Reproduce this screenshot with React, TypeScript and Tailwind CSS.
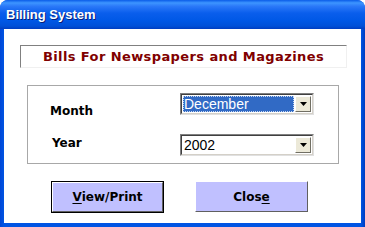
import React from "react";

function Arrow() {
  return (
    <svg width="7" height="4" viewBox="0 0 7 4">
      <path d="M0 0H7L3.5 4Z" fill="#000" />
    </svg>
  );
}

function Combo({ value, selected }: { value: string; selected?: boolean }) {
  return (
    <div className="flex h-[22px] w-[134px] border border-t-[#808080] border-l-[#808080] border-r-[#e0e0e0] border-b-[#e0e0e0] bg-white">
      <div className="flex flex-1 items-stretch border border-t-[#404040] border-l-[#404040] border-r-[#d4d0c8] border-b-[#d4d0c8] p-[1px]">
        <div
          className={
            selected
              ? "flex flex-1 items-center bg-[#316ac5] pl-[1px] text-white outline outline-1 outline-dotted outline-[#c8d8f0] -outline-offset-1"
              : "flex flex-1 items-center pl-[1px] text-black"
          }
          style={{ fontFamily: '"Liberation Sans", Arial, sans-serif', fontSize: "14px" }}
        >
          {value}
        </div>
        <div className="ml-[1px] flex w-[16px] items-center justify-center border border-t-white border-l-white border-r-[#716f64] border-b-[#716f64] bg-[#ece9d8]">
          <Arrow />
        </div>
      </div>
    </div>
  );
}

const comic = { fontFamily: '"DejaVu Sans", sans-serif' };

export default function App() {
  return (
    <div className="flex h-[227px] w-[365px] flex-col overflow-hidden rounded-t-[8px] bg-[#0054e3]">
      <div
        className="flex h-[29px] shrink-0 items-center pl-[6px] text-[13px] font-bold text-white"
        style={{
          fontFamily: '"Liberation Sans", Tahoma, sans-serif',
          textShadow: "1px 1px 0 #0a1f78",
          background:
            "linear-gradient(to bottom, #0a5ce8 0%, #3d95ff 10%, #2a78f8 22%, #0a5eec 45%, #0058e6 70%, #0050d8 90%, #003dc0 100%)",
        }}
      >
        Billing System
      </div>
      <div className="flex flex-1 flex-col px-[4px] pb-[4px] bg-[linear-gradient(to_right,#0046d6,#0054e3_4px,#0054e3_calc(100%-4px),#003cc0)]">
        <div className="flex flex-1 flex-col bg-white">
          <div className="ml-[16px] mr-[14px] mt-[16px] flex h-[23px] items-center justify-center border border-t-[#808080] border-l-[#808080] border-r-[#f0f0f0] border-b-[#f0f0f0]">
            <span
              className="text-[13px] font-bold tracking-[0.4px] text-[#800000]"
              style={comic}
            >
              Bills For Newspapers and Magazines
            </span>
          </div>
          <div className="ml-[23px] mr-[22px] mt-[17px] flex h-[79px] flex-col gap-[19px] border border-[#a8a8a8] pt-[7px]">
            <div className="flex h-[22px] items-start">
              <span className="ml-[22px] mt-[10px] w-[130px] text-[12px] leading-[16px] font-bold text-black" style={comic}>
                Month
              </span>
              <Combo value="December" selected />
            </div>
            <div className="flex h-[22px] items-start">
              <span className="ml-[24px] mt-[1px] w-[128px] text-[12px] leading-[16px] font-bold text-black" style={comic}>
                Year
              </span>
              <Combo value="2002" />
            </div>
          </div>
          <div className="mt-[17px] flex gap-[31px] pl-[47px]">
            <button
              className="flex h-[32px] w-[113px] items-center justify-center border border-black bg-[#c0c0ff] text-[12px] font-bold text-black"
              style={comic}
            >
              <span className="flex h-full w-full items-center justify-center border border-t-white border-l-white border-r-[#606060] border-b-[#606060]">
                <span className="underline underline-offset-2">V</span>iew/Print
              </span>
            </button>
            <button
              className="flex h-[31px] w-[113px] items-center justify-center border border-t-white border-l-white border-r-[#606060] border-b-[#606060] bg-[#c0c0ff] text-[12px] font-bold text-black"
              style={comic}
            >
              Clos<span className="underline underline-offset-2">e</span>
            </button>
          </div>
        </div>
      </div>
    </div>
  );
}
